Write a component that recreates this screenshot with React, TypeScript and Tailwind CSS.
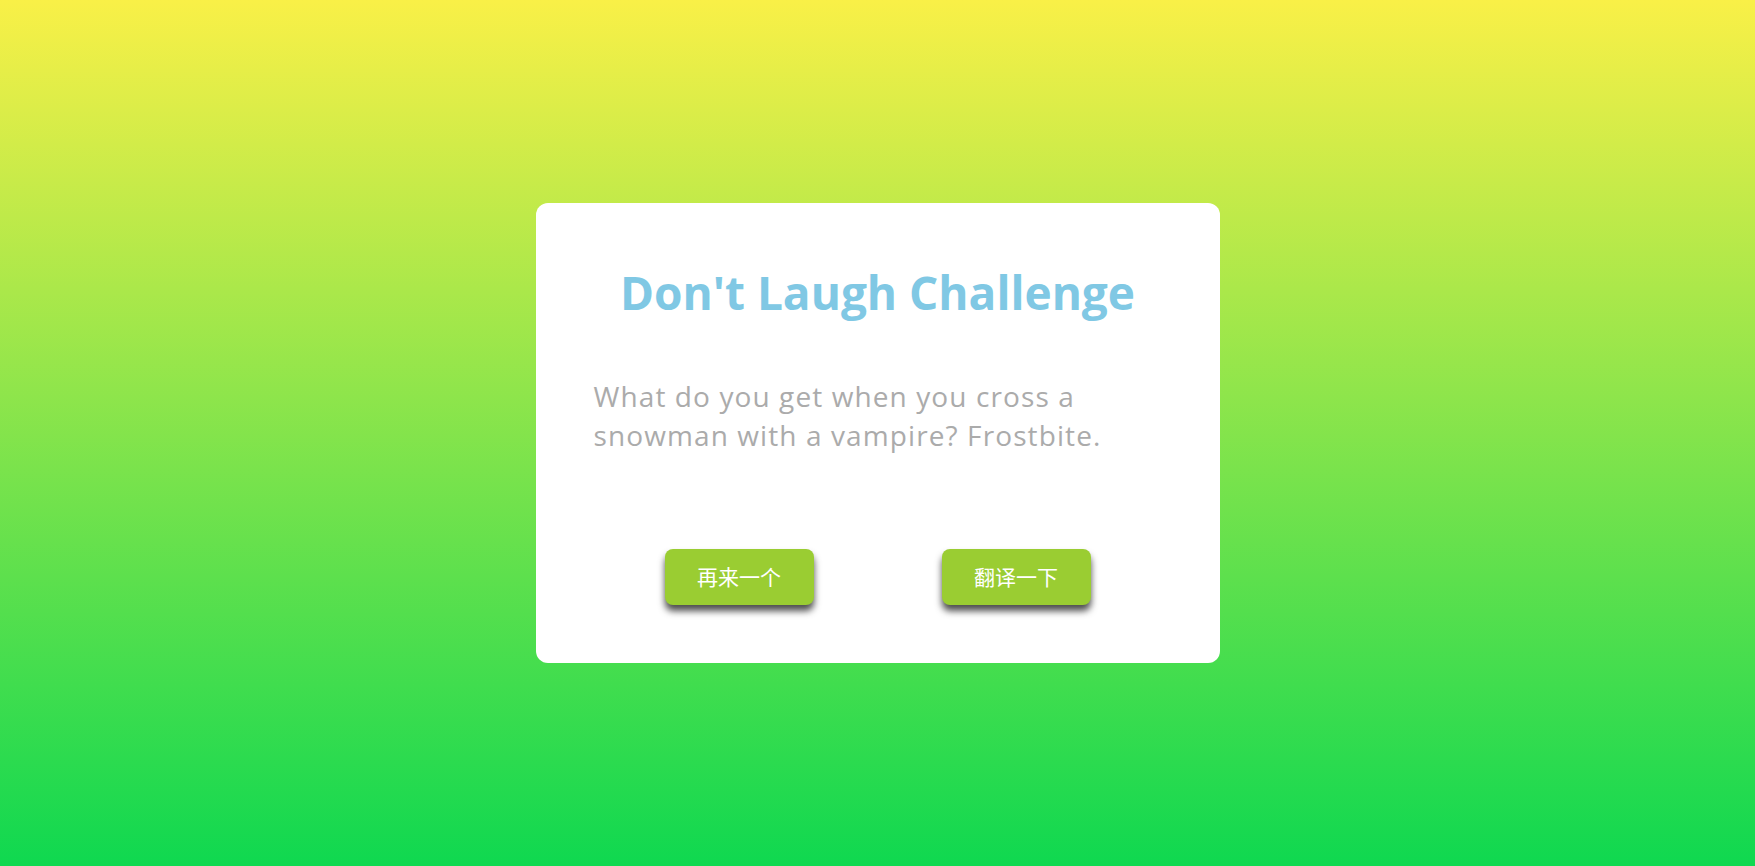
import React, { useState } from "react";

const jokes = [
  "What do you get when you cross a snowman with a vampire? Frostbite.",
];

const App = () => {
  const [index, setIndex] = useState(0);

  return (
    <div className="w-full min-h-screen flex items-center justify-center bg-[linear-gradient(to_bottom,#f9f047,#0fd850)] font-['Open_Sans','Noto_Sans_CJK_SC',sans-serif]">
      <div className="w-[684px] h-[460px] bg-white rounded-xl p-[58px] flex flex-col">
        <h1 className="text-[46px] leading-[62px] font-bold text-center text-[#80c8e4]">
          Don't Laugh Challenge
        </h1>
        <p className="mt-[54px] text-[28px] leading-[39px] tracking-[1.1px] text-[#ababab]">
          {jokes[index % jokes.length]}
        </p>
        <div className="mt-auto flex justify-center gap-32">
          <button
            onClick={() => setIndex(index + 1)}
            className="w-[149px] h-[56px] rounded-lg bg-[#9acd32] text-white text-[21px] shadow-[0_6px_7px_rgba(0,0,0,0.7)] font-['Noto_Sans_CJK_SC',sans-serif]"
          >
            再来一个
          </button>
          <button className="w-[149px] h-[56px] rounded-lg bg-[#9acd32] text-white text-[21px] shadow-[0_6px_7px_rgba(0,0,0,0.7)] font-['Noto_Sans_CJK_SC',sans-serif]">
            翻译一下
          </button>
        </div>
      </div>
    </div>
  );
};

export default App;
